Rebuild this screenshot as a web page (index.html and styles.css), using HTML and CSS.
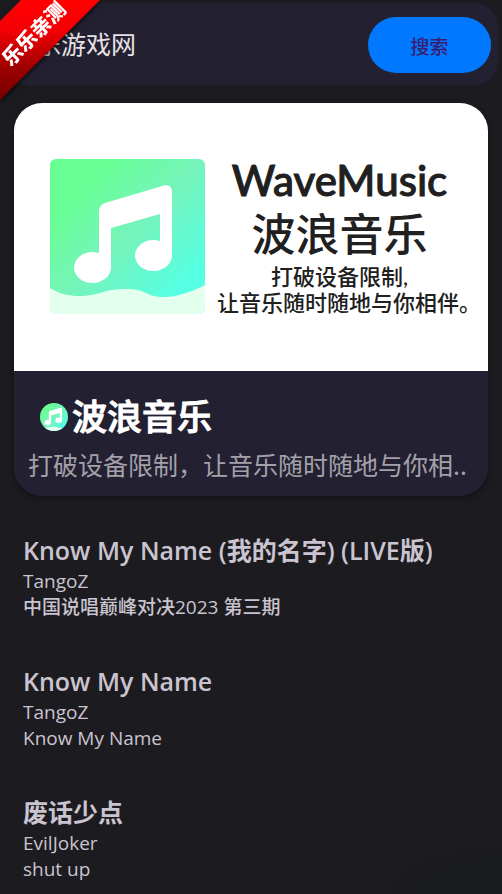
FILE: index.html
```html
<!DOCTYPE html>
<html lang="zh-CN">
<head>
<meta charset="utf-8">
<meta name="viewport" content="width=device-width, initial-scale=1">
<title>波浪音乐</title>
<link rel="stylesheet" href="styles.css">
</head>
<body>
<svg class="defs" width="0" height="0" aria-hidden="true">
  <defs>
    <linearGradient id="mint" x1="0" y1="0" x2="1" y2="1">
      <stop offset="0.2" stop-color="#6aff95"/>
      <stop offset="0.5" stop-color="#75f3bb"/>
      <stop offset="0.85" stop-color="#54ffe4"/>
    </linearGradient>
    <symbol id="note" viewBox="0 0 155 155">
      <path fill="#fff" d="M49 94V52Q49 46 55 44L114 26.500Q122 25 122 33V97A18.500 15.500 0 1 1 110 82V55L61 69V109A18.500 15.500 0 1 1 49 94Z"/>
    </symbol>
    <symbol id="wave" viewBox="0 0 155 155">
      <path fill="#e3ffee" d="M0 129C10 135 18 137 30 137C48 137 54 130 75 130C99 130 94 138 115 138C132 137 145 131 155 126V155H0Z"/>
    </symbol>
  </defs>
</svg>
<div class="ribbon"><span>乐乐亲测</span></div>
<form class="search">
  <input class="search-field" type="text" value="乐乐游戏网" aria-label="搜索歌曲">
  <button class="search-button" type="button">搜索</button>
</form>
<main>
  <article class="card">
    <div class="banner">
      <svg class="cover" viewBox="0 0 155 155" aria-hidden="true">
        <rect width="155" height="155" fill="url(#mint)"/>
        <use href="#wave"/><use href="#note"/>
      </svg>
      <div class="slogan">
        <p class="brand">WaveMusic</p>
        <p class="brand-cn">波浪音乐</p>
        <p>打破设备限制,</p>
        <p>让音乐随时随地与你相伴。</p>
      </div>
    </div>
    <div class="card-body">
      <h1>
        <svg class="logo" viewBox="0 0 155 155" aria-hidden="true">
          <rect width="155" height="155" fill="url(#mint)"/>
          <use href="#wave"/><use href="#note"/>
        </svg>
        波浪音乐
      </h1>
      <p class="summary">打破设备限制，让音乐随时随地与你相..</p>
    </div>
  </article>
  <ul class="songs">
    <li><h2>Know My Name (我的名字) (LIVE版)</h2><p>TangoZ</p><p>中国说唱巅峰对决2023 第三期</p></li>
    <li><h2>Know My Name</h2><p>TangoZ</p><p>Know My Name</p></li>
    <li><h2>废话少点</h2><p>EvilJoker</p><p>shut up</p></li>
  </ul>
</main>
</body>
</html>
```
FILE: styles.css
```css
* { box-sizing: border-box; }
html {
  min-height: 100%;
  background:
    radial-gradient(ellipse 120px 50px at 100% 100%, #181b1d 40%, #181b1d00) no-repeat,
    #1c1b1f;
}
body {
  margin: 0;
  padding: 3px 4px 0;
  color: #cac4d0;
  font-family: "Open Sans", "Noto Sans CJK SC", sans-serif;
  overflow-x: hidden;
}
h1, h2, p, ul { margin: 0; padding: 0; }
.defs { position: absolute; }

.ribbon {
  position: absolute;
  z-index: 2;
  top: 0;
  left: 0;
  width: 100px;
  height: 100px;
  filter: drop-shadow(1px 2px 2px #0009);
  pointer-events: none;
}
.ribbon::before {
  content: "";
  position: absolute;
  inset: 0;
  background: linear-gradient(180deg, #f00 0, #f40005 30%, #900 70%, #700 100%);
  clip-path: polygon(21px 0, 100% 0, 0 100%, 0 21px);
}
.ribbon span {
  position: absolute;
  top: 24px;
  left: -6px;
  width: 80px;
  transform: rotate(-45deg);
  color: #fff;
  font-size: 20px;
  font-weight: 900;
  line-height: 20px;
  text-align: center;
  white-space: nowrap;
}

.search {
  display: flex;
  align-items: center;
  padding: 14px 7px 12px 0;
  border-radius: 24px;
  background: #232032;
}
.search-field {
  flex: 1;
  min-width: 0;
  height: 52px;
  margin-bottom: 4px;
  padding: 0 7px;
  border: 0;
  outline: 0;
  background: none;
  color: #e6e1e5;
  font: 25px "Noto Sans CJK SC", sans-serif;
}
.search-button {
  width: 123px;
  height: 56px;
  border: 0;
  border-radius: 28px;
  background: #0078ff;
  color: #381e72;
  font: 500 19px "Noto Sans CJK SC", sans-serif;
}

main { padding: 18px 10px 0; }
.card {
  border-radius: 28px;
  overflow: hidden;
  background: #232032;
  box-shadow: 0 2px 6px #0006;
}
.banner {
  display: flex;
  align-items: center;
  gap: 12px;
  padding: 53px 26px 55px 36px;
  background: #fff;
  color: #202020;
}
.cover { flex: none; width: 155px; height: 155px; border-radius: 6px; }
.slogan {
  flex: 1;
  min-width: 0;
  font-family: Lato, "Noto Sans CJK SC", sans-serif;
  font-size: 22px;
  font-weight: 500;
  line-height: 26px;
  text-align: center;
  white-space: nowrap;
}
.slogan .brand {
  font-size: 42px;
  line-height: 48px;
  -webkit-text-stroke: 1px #202020;
}
.slogan .brand-cn {
  font-size: 44px;
  line-height: 60px;
}
.card-body { padding: 21px 14px 10px; }
h1 {
  display: flex;
  align-items: center;
  gap: 4px;
  padding-left: 12px;
  color: #fff;
  font-size: 35px;
  font-weight: 500;
  line-height: 50px;
  -webkit-text-stroke: 1px #fff;
}
.logo { width: 28px; height: 28px; border-radius: 50%; }
.summary {
  color: #a3a1a9;
  font-family: "Noto Sans CJK SC", sans-serif;
  font-size: 25px;
  line-height: 44px;
  white-space: nowrap;
}
.songs {
  display: grid;
  gap: 44px;
  padding: 37px 9px 10px;
  list-style: none;
  font-size: 19px;
  font-weight: 500;
  line-height: 26px;
}
h2 { font-size: 25px; font-weight: 600; line-height: 35px; }
```
